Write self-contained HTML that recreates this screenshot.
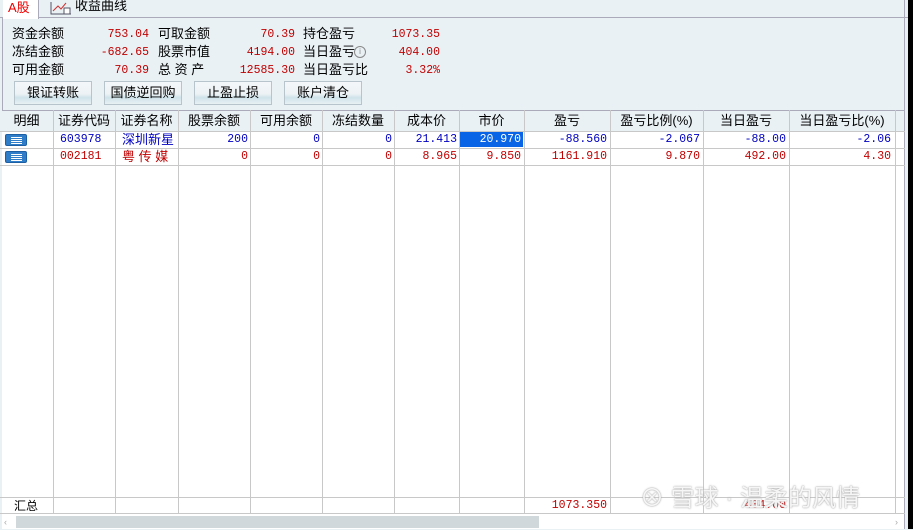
<!DOCTYPE html><html><head><meta charset="utf-8"><style>
*{margin:0;padding:0;box-sizing:border-box}
body{width:913px;height:529px;position:relative;overflow:hidden;background:#e9f1f5;font-family:"Liberation Sans","Noto Sans CJK SC",sans-serif;font-size:12px;color:#000}
.a{position:absolute;white-space:nowrap;line-height:16px}
.r{color:#c00000}.b{color:#0000c0}
.num{font-family:"Liberation Mono","Noto Sans CJK SC",monospace;font-size:11.5px}
.btn{position:absolute;top:81px;height:24px;width:78px;border:1px solid #b8c4cc;background:linear-gradient(#f4f7f9 0%,#edf2f5 55%,#cfe3ea 70%,#e8f0f3 100%);text-align:center;line-height:22px;font-size:13px}
.vl{position:absolute;top:110px;height:404px;width:1px;background:#c8c8c8}
.hl{position:absolute;left:0;width:905px;height:1px;background:#c8c8c8}
.ic{position:absolute;left:5px;width:22px;height:12px;background:#2f7cc8;border-radius:2px;border:1px solid #1d5fa3}
.ic:after{content:"";position:absolute;left:5px;top:2px;width:11px;height:1px;background:#fff;box-shadow:0 2px 0 #fff,0 4px 0 #fff,0 6px 0 #fff}
.h{font-size:13px;top:113px;text-align:center}
</style></head><body>
<div class="a" style="left:0;top:0;width:913px;height:18px;background:#e9f1f5;border-bottom:1px solid #aab"></div>
<div class="a" style="left:3px;top:0;width:36px;height:19px;background:#fff;border-right:1px solid #aab"></div>
<div class="a r" style="left:8px;top:0;font-size:13px;color:#e00">A股</div>
<svg class="a" style="left:50px;top:1px" width="22" height="14"><path d="M1 1v12h20" stroke="#556" fill="none"/><path d="M3 10l5-5 3 3 5-6" stroke="#c33" fill="none"/><rect x="14" y="7" width="6" height="6" fill="#fff" stroke="#556"/></svg>
<div class="a" style="left:75px;top:-2px;font-size:13px">收益曲线</div>
<div class="a" style="left:2px;top:18px;width:1px;height:92px;background:#aab"></div>
<div class="a" style="left:904px;top:0;width:1px;height:529px;background:#aab"></div>
<div class="a" style="left:908px;top:0;width:5px;height:529px;background:#000"></div>
<div class="a" style="left:12px;top:26px;font-size:13px">资金余额</div>
<div class="a" style="left:12px;top:44px;font-size:13px">冻结金额</div>
<div class="a" style="left:12px;top:62px;font-size:13px">可用金额</div>
<div class="a num r" style="right:764px;top:27px">753.04</div>
<div class="a num r" style="right:764px;top:45px">-682.65</div>
<div class="a num r" style="right:764px;top:63px">70.39</div>
<div class="a" style="left:158px;top:26px;font-size:13px">可取金额</div>
<div class="a" style="left:158px;top:44px;font-size:13px">股票市值</div>
<div class="a" style="left:158px;top:62px;font-size:13px">总 资 产</div>
<div class="a num r" style="right:618px;top:27px">70.39</div>
<div class="a num r" style="right:618px;top:45px">4194.00</div>
<div class="a num r" style="right:618px;top:63px">12585.30</div>
<div class="a" style="left:303px;top:26px;font-size:13px">持仓盈亏</div>
<div class="a" style="left:303px;top:44px;font-size:13px">当日盈亏</div>
<div class="a" style="left:354px;top:46px;width:12px;height:12px;border:1px solid #888;border-radius:50%;font-size:8px;text-align:center;line-height:10px;color:#888">i</div>
<div class="a" style="left:303px;top:62px;font-size:13px">当日盈亏比</div>
<div class="a num r" style="right:473px;top:27px">1073.35</div>
<div class="a num r" style="right:473px;top:45px">404.00</div>
<div class="a num r" style="right:473px;top:63px">3.32%</div>
<div class="btn" style="left:14px">银证转账</div>
<div class="btn" style="left:104px">国债逆回购</div>
<div class="btn" style="left:194px">止盈止损</div>
<div class="btn" style="left:284px">账户清仓</div>
<div class="a" style="left:2px;top:110px;width:902px;height:404px;background:#fff"></div>
<div class="a" style="left:2px;top:110px;width:902px;height:21px;background:#e9f1f5;border-top:1px solid #aab"></div>
<div class="hl" style="top:131px"></div><div class="hl" style="top:148px"></div><div class="hl" style="top:165px"></div>
<div class="hl" style="top:497px"></div><div class="hl" style="top:513px"></div>
<div class="vl" style="left:53px"></div><div class="vl" style="left:115px"></div><div class="vl" style="left:178px"></div><div class="vl" style="left:250px"></div><div class="vl" style="left:322px"></div><div class="vl" style="left:394px"></div><div class="vl" style="left:459px"></div><div class="vl" style="left:524px"></div><div class="vl" style="left:610px"></div><div class="vl" style="left:703px"></div><div class="vl" style="left:789px"></div><div class="vl" style="left:895px"></div>
<div class="a h" style="left:0;width:53px">明细</div>
<div class="a h" style="left:53px;width:62px">证券代码</div>
<div class="a h" style="left:115px;width:63px">证券名称</div>
<div class="a h" style="left:178px;width:72px">股票余额</div>
<div class="a h" style="left:250px;width:72px">可用余额</div>
<div class="a h" style="left:322px;width:72px">冻结数量</div>
<div class="a h" style="left:394px;width:65px">成本价</div>
<div class="a h" style="left:459px;width:65px">市价</div>
<div class="a h" style="left:524px;width:86px">盈亏</div>
<div class="a h" style="left:610px;width:93px">盈亏比例(%)</div>
<div class="a h" style="left:703px;width:86px">当日盈亏</div>
<div class="a h" style="left:789px;width:106px">当日盈亏比(%)</div>
<div class="ic" style="top:134px"></div><div class="ic" style="top:151px"></div>
<div class="a" style="left:460px;top:132px;width:63px;height:15px;background:#0a64e6"></div>
<div class="b">
<div class="a num" style="left:60px;top:132px">603978</div>
<div class="a" style="left:122px;top:132px;font-size:13px">深圳新星</div>
<div class="a num" style="right:665px;top:132px">200</div>
<div class="a num" style="right:593px;top:132px">0</div>
<div class="a num" style="right:521px;top:132px">0</div>
<div class="a num" style="right:456px;top:132px">21.413</div>
<div class="a num" style="right:392px;top:132px;color:#fff">20.970</div>
<div class="a num" style="right:306px;top:132px">-88.560</div>
<div class="a num" style="right:213px;top:132px">-2.067</div>
<div class="a num" style="right:127px;top:132px">-88.00</div>
<div class="a num" style="right:22px;top:132px">-2.06</div>
</div>
<div class="r">
<div class="a num" style="left:60px;top:149px">002181</div>
<div class="a" style="left:122px;top:149px;font-size:13px">粤 传 媒</div>
<div class="a num" style="right:665px;top:149px">0</div>
<div class="a num" style="right:593px;top:149px">0</div>
<div class="a num" style="right:521px;top:149px">0</div>
<div class="a num" style="right:456px;top:149px">8.965</div>
<div class="a num" style="right:392px;top:149px">9.850</div>
<div class="a num" style="right:306px;top:149px">1161.910</div>
<div class="a num" style="right:213px;top:149px">9.870</div>
<div class="a num" style="right:127px;top:149px">492.00</div>
<div class="a num" style="right:22px;top:149px">4.30</div>
<div class="a num" style="right:306px;top:498px">1073.350</div>
<div class="a num" style="right:127px;top:498px">404.00</div>
</div>
<div class="a" style="left:14px;top:498px;font-size:12px">汇总</div>
<div class="a" style="left:640px;top:484px;font-size:24px;line-height:30px;color:rgba(255,255,255,.9);text-shadow:0 0 1px #999,0 0 2px #bbb">⊗ 雪球 · 温柔的风情</div>
<div class="a" style="left:2px;top:514px;width:902px;height:15px;background:#fff"></div>
<div class="a" style="left:16px;top:516px;width:523px;height:12px;background:#d0d8dc"></div>
<div class="a" style="left:4px;top:514px;font-size:9px;color:#aaa">‹</div>
<div class="a" style="left:895px;top:514px;font-size:9px;color:#aaa">›</div>
</body></html>
